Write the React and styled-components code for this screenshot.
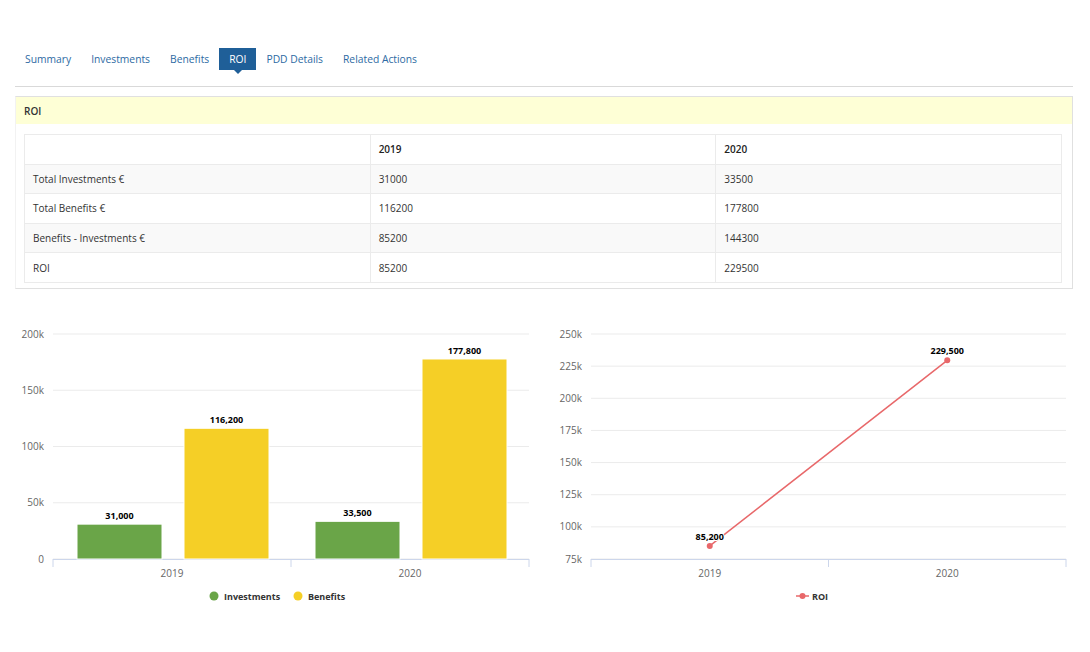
import React from "react";
import styled, { createGlobalStyle } from "styled-components";

const GlobalStyle = createGlobalStyle`
    html, body {
        margin: 0;
        padding: 0;
        background: #fff;
        font-family: "Open Sans", "DejaVu Sans", sans-serif;
    }
`

const Page = styled.div`
    width: 1058px;
    padding: 48px 17px 0 15px;
`

const TabBar = styled.div`
    display: flex;
    height: 22px;
    padding-bottom: 16px;
    border-bottom: 1px solid #d9d9d9;
`

const Tab = styled.div`
    position: relative;
    display: flex;
    align-items: center;
    padding: 0 10px;
    font-size: 10.3px;
    color: ${p => p.$active ? "#fff" : "#2d6aa3"};
    background: ${p => p.$active ? "#1f5f98" : "transparent"};

    &::after{
        content: "";
        display: ${p => p.$active ? "block" : "none"};
        position: absolute;
        left: 50%;
        bottom: -4px;
        margin-left: -4px;
        border-left: 4px solid transparent;
        border-right: 4px solid transparent;
        border-top: 4px solid #1f5f98;
    }
`

const Panel = styled.div`
    margin-top: 9px;
    border: 1px solid #e0e0e0;
    border-left-color: #f2f2f2;
    padding-bottom: 5px;
`

const PanelHeader = styled.div`
    height: 27px;
    display: flex;
    align-items: center;
    padding-left: 8px;
    background: #feffd6;
    font-size: 10px;
    font-weight: 600;
    color: #333;
`

const Table = styled.table`
    width: calc(100% - 18px);
    margin: 10px 9px 0 8px;
    border-collapse: collapse;
    table-layout: fixed;
    font-size: 10px;
    color: #333;

    td, th{
        height: 28.6px;
        padding: 0 8px;
        border: 1px solid #ebebeb;
        text-align: left;
    }

    th{
        font-weight: 600;
        color: #222;
    }

    tbody tr:nth-child(odd){
        background: #f9f9f9;
    }
`

const Charts = styled.div`
    display: grid;
    grid-template-columns: 530px 528px;
    margin-top: 22px;
`

const AxisLabel = styled.text`
    font-size: 10px;
    fill: #666;
    font-family: "Open Sans", sans-serif;
`

const DataLabel = styled.text`
    font-size: 9px;
    font-weight: 700;
    fill: #000;
    font-family: "Open Sans", sans-serif;
    stroke: #fff;
    stroke-width: 2px;
    paint-order: stroke;
`

const LegendLabel = styled.text`
    font-size: 9px;
    font-weight: 700;
    fill: #333;
    font-family: "Open Sans", sans-serif;
`

const rows = [
    ["Total Investments €", "31000", "33500"],
    ["Total Benefits €", "116200", "177800"],
    ["Benefits - Investments €", "85200", "144300"],
    ["ROI", "85200", "229500"],
]

const fmt = (n) => n.toLocaleString("en-US")

const BarChart = () => {
    const left = 38, right = 514, top = 23, bottom = 248
    const max = 200000
    const ticks = [0, 50000, 100000, 150000, 200000]
    const y = v => bottom - (v / max) * (bottom - top)
    const groups = [
        { name: "2019", values: [31000, 116200] },
        { name: "2020", values: [33500, 177800] },
    ]
    const colors = ["#6aa548", "#f5cf26"]
    const gw = (right - left) / groups.length

    return (
        <svg width="530" height="310">
            {ticks.map(t => (
                <g key={t}>
                    <line x1={left} x2={right} y1={y(t)} y2={y(t)} stroke="#ebebeb" />
                    <AxisLabel x={29} y={y(t) + 3.5} textAnchor="end">{t === 0 ? "0" : t / 1000 + "k"}</AxisLabel>
                </g>
            ))}
            <line x1={left} x2={right} y1={bottom + 0.5} y2={bottom + 0.5} stroke="#ccd6eb" />
            {[0, 1, 2].map(i => (
                <line key={i} x1={left + i * gw} x2={left + i * gw} y1={bottom} y2={bottom + 8} stroke="#ccd6eb" />
            ))}
            {groups.map((g, gi) => {
                const gx = left + gi * gw
                return (
                    <g key={g.name}>
                        {g.values.map((v, vi) => {
                            const bx = gx + 24 + vi * 107
                            return (
                                <g key={vi}>
                                    <rect x={bx} y={y(v)} width={85} height={bottom - y(v)} fill={colors[vi]} stroke="#fff" strokeWidth="1" />
                                    <DataLabel x={bx + 42.5} y={y(v) - 5} textAnchor="middle">{fmt(v)}</DataLabel>
                                </g>
                            )
                        })}
                        <AxisLabel x={gx + gw / 2} y={266} textAnchor="middle">{g.name}</AxisLabel>
                    </g>
                )
            })}
            <circle cx={199} cy={285} r={4.5} fill={colors[0]} />
            <LegendLabel x={209} y={288.5}>Investments</LegendLabel>
            <circle cx={283} cy={285} r={4.5} fill={colors[1]} />
            <LegendLabel x={293} y={288.5}>Benefits</LegendLabel>
        </svg>
    )
}

const LineChart = () => {
    const left = 46, right = 521, top = 23, bottom = 248
    const min = 75000, max = 250000
    const ticks = [75000, 100000, 125000, 150000, 175000, 200000, 225000, 250000]
    const y = v => bottom - ((v - min) / (max - min)) * (bottom - top)
    const points = [
        { name: "2019", value: 85200 },
        { name: "2020", value: 229500 },
    ]
    const gw = (right - left) / points.length
    const px = i => left + gw * i + gw / 2
    const color = "#e8686a"

    return (
        <svg width="528" height="310">
            {ticks.map(t => (
                <g key={t}>
                    <line x1={left} x2={right} y1={y(t)} y2={y(t)} stroke="#ebebeb" />
                    <AxisLabel x={37} y={y(t) + 3.5} textAnchor="end">{t / 1000 + "k"}</AxisLabel>
                </g>
            ))}
            <line x1={left} x2={right} y1={bottom + 0.5} y2={bottom + 0.5} stroke="#ccd6eb" />
            {[0, 1, 2].map(i => (
                <line key={i} x1={left + i * gw} x2={left + i * gw} y1={bottom} y2={bottom + 8} stroke="#ccd6eb" />
            ))}
            <polyline points={points.map((p, i) => `${px(i)},${y(p.value)}`).join(" ")} fill="none" stroke={color} strokeWidth="1.5" />
            {points.map((p, i) => (
                <g key={p.name}>
                    <circle cx={px(i)} cy={y(p.value)} r={3} fill={color} />
                    <DataLabel x={px(i)} y={y(p.value) - 6} textAnchor="middle">{fmt(p.value)}</DataLabel>
                    <AxisLabel x={px(i)} y={266} textAnchor="middle">{p.name}</AxisLabel>
                </g>
            ))}
            <line x1={251} x2={264} y1={285} y2={285} stroke={color} strokeWidth="1.5" />
            <circle cx={257.5} cy={285} r={3} fill={color} />
            <LegendLabel x={267} y={288.5}>ROI</LegendLabel>
        </svg>
    )
}

const App = () => {
    const tabs = ["Summary", "Investments", "Benefits", "ROI", "PDD Details", "Related Actions"]

    return (
        <Page>
            <GlobalStyle />
            <TabBar>
                {tabs.map(t => <Tab key={t} $active={t === "ROI"}>{t}</Tab>)}
            </TabBar>
            <Panel>
                <PanelHeader>ROI</PanelHeader>
                <Table>
                    <thead>
                        <tr><th></th><th>2019</th><th>2020</th></tr>
                    </thead>
                    <tbody>
                        {rows.map(r => (
                            <tr key={r[0]}>
                                {r.map((c, i) => <td key={i}>{c}</td>)}
                            </tr>
                        ))}
                    </tbody>
                </Table>
            </Panel>
            <Charts>
                <BarChart />
                <LineChart />
            </Charts>
        </Page>
    )
}

export default App;
